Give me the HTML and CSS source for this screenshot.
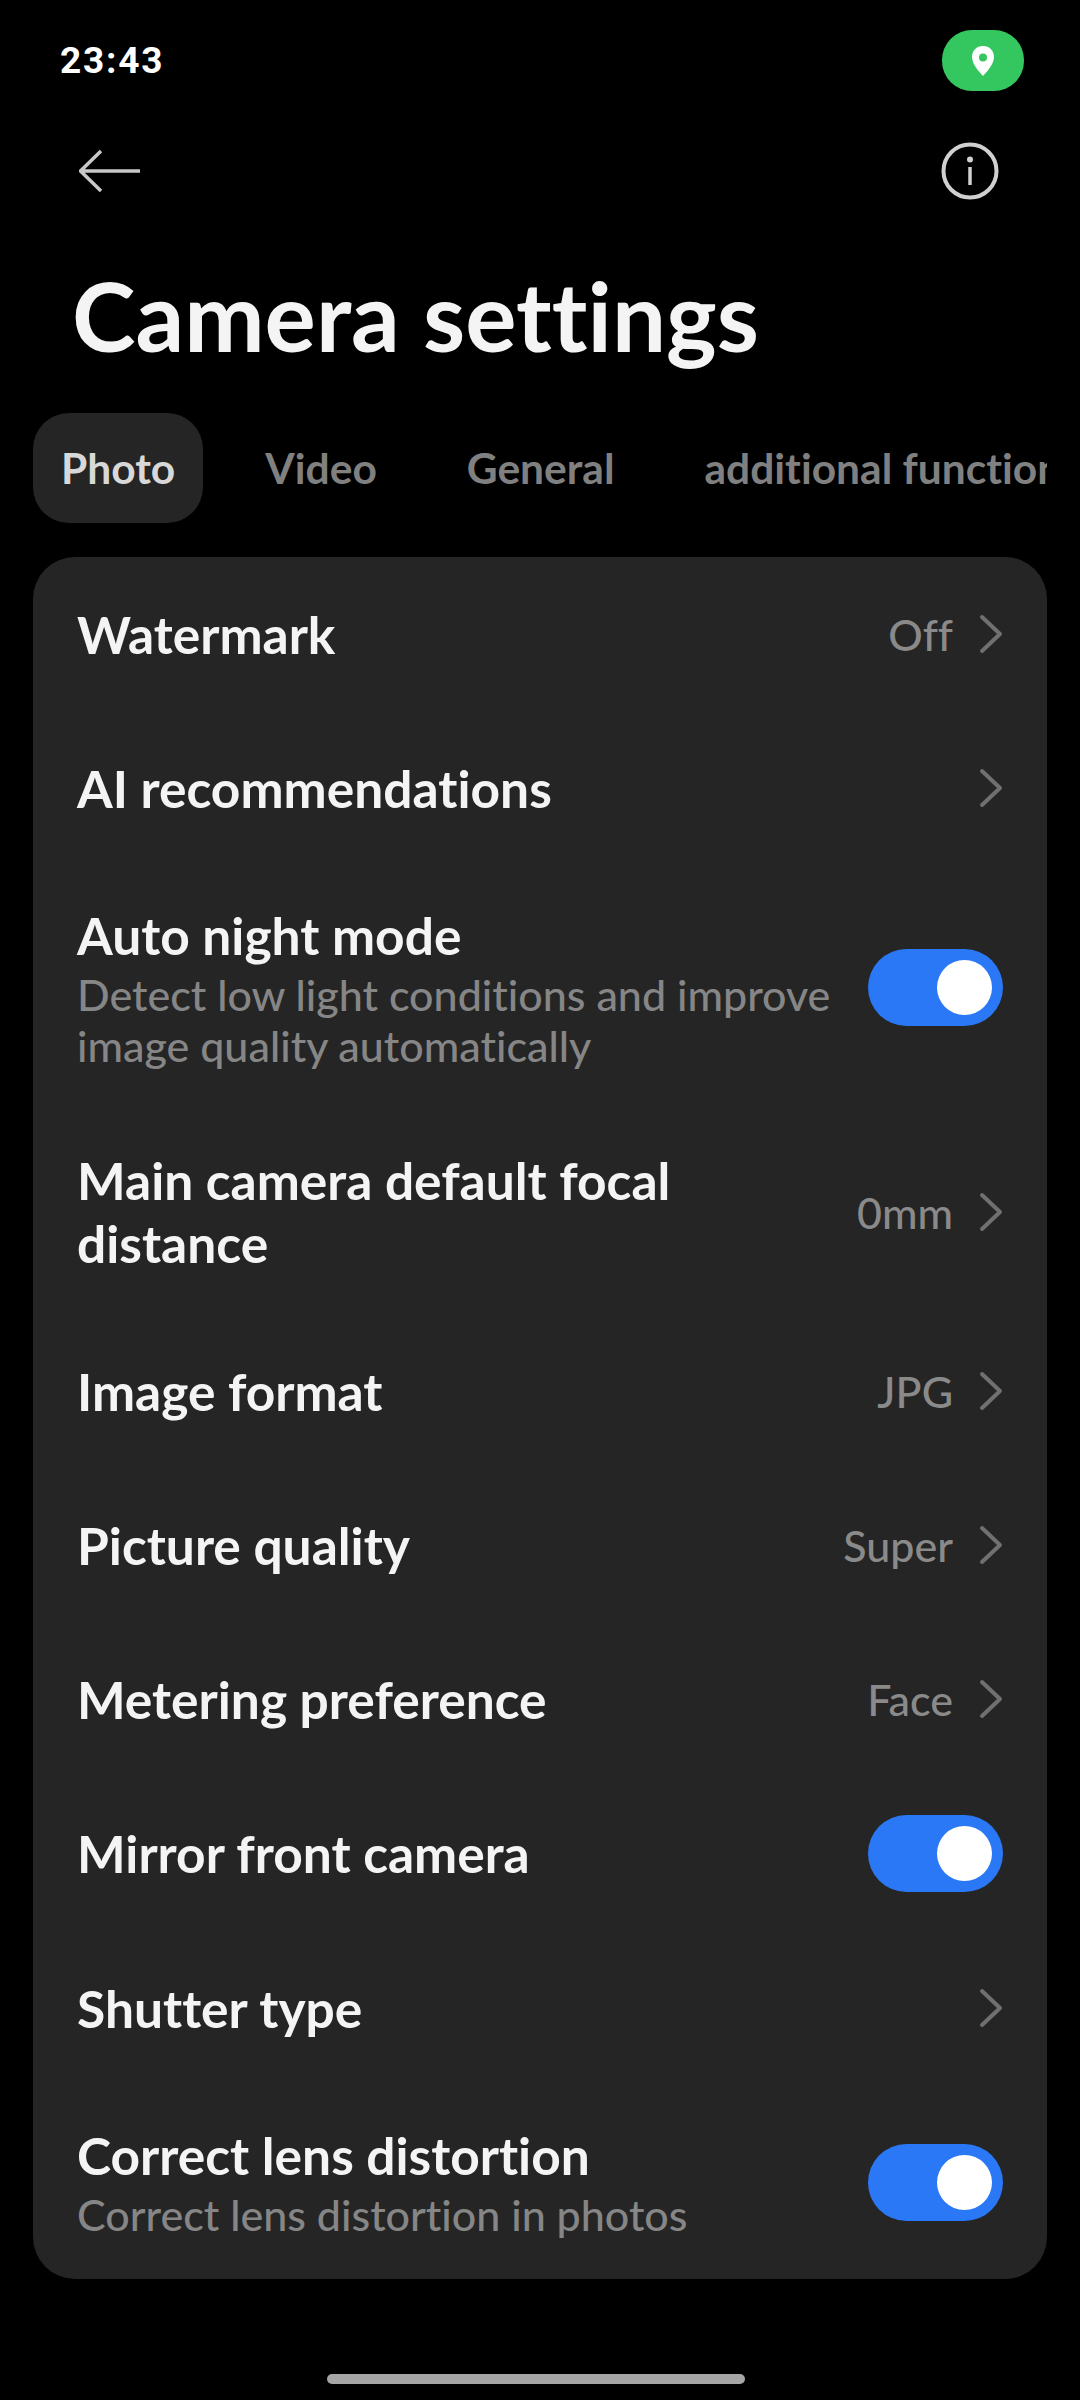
FILE: index.html
```html
<!DOCTYPE html>
<html lang="en">
<head>
<meta charset="utf-8">
<title>Camera settings</title>
<link rel="stylesheet" href="styles.css">
</head>
<body>
<div class="screen">
  <div class="status">
    <span class="time">23:43</span>
    <span class="pill"><svg width="24" height="30" viewBox="0 0 24 30"><path fill-rule="evenodd" fill="#fff" d="M12 0C5.4 0 1 4.800 1 11c0 7 6.500 14 11 19 4.500-5 11-12 11-19C23 4.800 18.600 0 12 0Zm0 7.500a4 4 0 1 1 0 8 4 4 0 0 1 0-8Z"/></svg></span>
  </div>
  <div class="nav">
    <svg class="back" width="62" height="44" viewBox="0 0 62 44"><path d="M61 22H2M22 2 1.500 22 22 42" fill="none" stroke="#c8c8c8" stroke-width="3.500"/></svg>
    <svg class="info" width="58" height="58" viewBox="0 0 58 58"><circle cx="29" cy="29" r="26.500" fill="none" stroke="#d0d0d0" stroke-width="4"/><circle cx="29" cy="17.500" r="3" fill="#d0d0d0"/><path d="M29 25v18" stroke="#d0d0d0" stroke-width="3.500"/></svg>
  </div>
  <h1 class="title">Camera settings</h1>
  <div class="tabs">
    <span class="tab active">Photo</span>
    <span class="tab">Video</span>
    <span class="tab">General</span>
    <span class="tab">additional functions</span>
  </div>
  <div class="card">
    <div class="row"><div class="text"><div class="name">Watermark</div></div><span class="value">Off</span><svg class="chev" viewBox="0 0 24 40"><path d="M3 3l18 17L3 37"/></svg></div>
    <div class="row"><div class="text"><div class="name">AI recommendations</div></div><svg class="chev" viewBox="0 0 24 40"><path d="M3 3l18 17L3 37"/></svg></div>
    <div class="row"><div class="text"><div class="name">Auto night mode</div><div class="sub">Detect low light conditions and improve image quality automatically</div></div><span class="toggle"><span class="knob"></span></span></div>
    <div class="row"><div class="text narrow"><div class="name">Main camera default focal distance</div></div><span class="value">0mm</span><svg class="chev" viewBox="0 0 24 40"><path d="M3 3l18 17L3 37"/></svg></div>
    <div class="row"><div class="text"><div class="name">Image format</div></div><span class="value">JPG</span><svg class="chev" viewBox="0 0 24 40"><path d="M3 3l18 17L3 37"/></svg></div>
    <div class="row"><div class="text"><div class="name">Picture quality</div></div><span class="value">Super</span><svg class="chev" viewBox="0 0 24 40"><path d="M3 3l18 17L3 37"/></svg></div>
    <div class="row"><div class="text"><div class="name">Metering preference</div></div><span class="value">Face</span><svg class="chev" viewBox="0 0 24 40"><path d="M3 3l18 17L3 37"/></svg></div>
    <div class="row"><div class="text"><div class="name">Mirror front camera</div></div><span class="toggle"><span class="knob"></span></span></div>
    <div class="row"><div class="text"><div class="name">Shutter type</div></div><svg class="chev" viewBox="0 0 24 40"><path d="M3 3l18 17L3 37"/></svg></div>
    <div class="row"><div class="text"><div class="name">Correct lens distortion</div><div class="sub">Correct lens distortion in photos</div></div><span class="toggle"><span class="knob"></span></span></div>
  </div>
  <div class="home"></div>
</div>
</body>
</html>
```
FILE: styles.css
```css
* { box-sizing: border-box; }
html, body { margin: 0; padding: 0; background: #000; }
body { font-family: "Lato", "Noto Sans", sans-serif; color: #f4f4f4; font-variant-ligatures: none; }
.screen { width: 1080px; height: 2400px; overflow: hidden; display: flex; flex-direction: column; background: #000; }
.status { height: 61px; margin-top: 30px; padding: 0 56px 0 60px; display: flex; justify-content: space-between; align-items: center; }
.time { font-family: "Roboto", sans-serif; font-weight: 700; font-size: 37px; letter-spacing: 1.800px; color: #fff; }
.pill { width: 82px; height: 61px; border-radius: 30px; background: #34c75f; display: flex; align-items: center; justify-content: center; }
.nav { margin-top: 51px; height: 58px; padding: 0 81px 0 79px; display: flex; justify-content: space-between; align-items: center; }
.title { margin: 65px 0 0; padding-left: 72px; font-size: 96px; line-height: 100px; font-weight: 700; color: #f4f4f4; }
.tabs { margin: 48px 33px 0; height: 110px; display: flex; align-items: center; overflow: hidden; white-space: nowrap; }
.tab { font-size: 42.500px; font-weight: 700; color: #808080; padding: 0 28px; margin-right: 34px; height: 110px; line-height: 110px; border-radius: 36px; flex: none; }
.tab.active { background: #252525; color: #d8d8d8; }
.card { margin: 34px 33px 0; width: 1014px; background: #252525; border-radius: 42px; display: flex; flex-direction: column; }
.row { min-height: 154px; padding: 39px 44px; display: flex; align-items: center; }
.text { flex: 1; min-width: 0; padding-right: 36px; }
.text.narrow { padding-right: 100px; }
.name { font-size: 51.500px; line-height: 63px; font-weight: 700; color: #f4f4f4; }
.sub { margin-top: 2px; font-size: 43px; line-height: 51px; font-weight: 500; color: #868686; }
.value { font-size: 43px; font-weight: 500; color: #8a8a8a; margin-right: 26px; flex: none; }
.chev { width: 24px; height: 40px; flex: none; fill: none; stroke: #707070; stroke-width: 4; stroke-linecap: round; stroke-linejoin: round; }
.toggle { width: 135px; height: 77px; border-radius: 39px; background: #2a78f5; padding: 11px; flex: none; display: flex; justify-content: flex-end; }
.knob { width: 55px; height: 55px; border-radius: 50%; background: #fff; }
.home { margin: 95px 0 0 327px; width: 418px; height: 10px; border-radius: 5px; background: #a5a5a5; }
```
